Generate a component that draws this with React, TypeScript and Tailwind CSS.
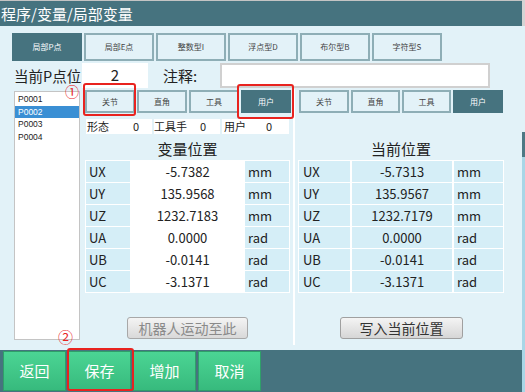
import React from "react";

const TYPE_TABS = ["局部P点", "局部E点", "整数型I", "浮点型D", "布尔型B", "字符型S"];
const SUB_TABS = ["关节", "直角", "工具", "用户"];
const POINTS = ["P0001", "P0002", "P0003", "P0004"];

const VAR_ROWS = [
  { k: "UX", v: "-5.7382", u: "mm" },
  { k: "UY", v: "135.9568", u: "mm" },
  { k: "UZ", v: "1232.7183", u: "mm" },
  { k: "UA", v: "0.0000", u: "rad" },
  { k: "UB", v: "-0.0141", u: "rad" },
  { k: "UC", v: "-3.1371", u: "rad" },
];

const CUR_ROWS = [
  { k: "UX", v: "-5.7313", u: "mm" },
  { k: "UY", v: "135.9567", u: "mm" },
  { k: "UZ", v: "1232.7179", u: "mm" },
  { k: "UA", v: "0.0000", u: "rad" },
  { k: "UB", v: "-0.0141", u: "rad" },
  { k: "UC", v: "-3.1371", u: "rad" },
];

function SubTabs({ widths }: { widths: string[] }) {
  return (
    <div className="ml-[1px] mt-[1px] flex gap-[2px] h-[23px]">
      {SUB_TABS.map((t, i) => (
        <div
          key={t}
          className={
            (i === 3
              ? "bg-[#46737f] text-white border-[#46737f] "
              : "bg-[#e3f2f8] text-[#444] border-[#8eaeb6] ") +
            widths[i] +
            " border-2 flex items-center justify-center text-[8px]"
          }
        >
          {t}
        </div>
      ))}
    </div>
  );
}

export default function App() {
  return (
    <div className="w-[525px] h-[392px] flex overflow-hidden font-['Noto_Sans_CJK_SC',sans-serif] text-[#222]">
      <div className="w-[522px] flex flex-col">
        <div className="h-px bg-[#c4c4c4]" />
        {/* Title */}
        <div className="h-[25px] bg-[#46737f] text-white text-[15px] leading-[25px] pl-[1px]">
          程序/变量/局部变量
        </div>

        {/* Body */}
        <div className="flex-1 bg-[#e2f2f8] relative">
          <div className="mt-[7px] ml-[12px] flex gap-[2px] h-[28px]">
            {TYPE_TABS.map((t, i) => (
              <div
                key={t}
                className={
                  (i === 0
                    ? "bg-[#46737f] text-white border-[#46737f] "
                    : "bg-[#e3f2f8] text-[#444] border-[#8eaeb6] ") +
                  "w-[70px] border-2 flex items-center justify-center text-[8px]"
                }
              >
                {t}
              </div>
            ))}
          </div>

          <div className="mt-[2px] h-[25px] flex items-center">
            <div className="ml-[14px] w-[68px] text-[14.5px] leading-[14px] whitespace-nowrap">当前P点位</div>
            <div className="w-[66px] h-[25px] bg-white flex items-center justify-center text-[15px]">2</div>
            <div className="ml-[15px] w-[57px] text-[15px] leading-none whitespace-nowrap">注释:</div>
            <div className="w-[270px] h-[25px] bg-white border-2 border-[#d0d0d0]" />
          </div>

          <div className="mt-[1px] flex">
            {/* point list */}
            <div className="ml-[14px] mt-[2px] w-[66px] h-[249px] bg-white border border-[#c4c4c4] pt-[1px] text-[8.5px] font-['Liberation_Sans',sans-serif]">
              {POINTS.map((p, i) => (
                <div
                  key={p}
                  className={
                    (i === 1 ? "bg-[#3a8fd4] text-white " : "") +
                    "h-[12.5px] leading-[12.5px] pl-[3px]"
                  }
                >
                  {p}
                </div>
              ))}
            </div>

            {/* variable panel */}
            <div className="ml-[4px] w-[207px] flex flex-col">
              <SubTabs widths={["w-[50px]", "w-[50px]", "w-[50px]", "w-[50px]"]} />
              <div className="mt-[6px] ml-[2px] flex gap-[2px] h-[15px] text-[11px] leading-[15px]">
                <div className="w-[66px] bg-white flex">
                  <span className="w-[47px] pl-[1px]">形态</span>
                  <span>0</span>
                </div>
                <div className="w-[66px] bg-white flex">
                  <span className="w-[46px]">工具手</span>
                  <span>0</span>
                </div>
                <div className="w-[67px] bg-white flex">
                  <span className="w-[44px] pl-[2px]">用户</span>
                  <span>0</span>
                </div>
              </div>
              <div className="h-[26px] pt-[4px] flex items-center justify-center text-[15px]">变量位置</div>
              <div className="ml-[1px] w-[205px] bg-white p-[1px] flex flex-col gap-[1px] text-[13px]">
                {VAR_ROWS.map((r) => (
                  <div key={r.k} className="grid grid-cols-[44px_111px_44px] gap-[2px] h-[21px] leading-[21px]">
                    <div className="bg-[#d5eef7] pl-[3px]">{r.k}</div>
                    <div className="bg-white text-center">{r.v}</div>
                    <div className="bg-[#d5eef7] pl-[3px]">{r.u}</div>
                  </div>
                ))}
              </div>
              <div className="mt-[24px] mx-auto w-[121px] h-[22px] rounded-[3px] border border-[#a8a8a8] bg-gradient-to-b from-[#f4f4f4] to-[#d9d9d9] flex items-center justify-center text-[14px] text-[#8a8a8a]">
                机器人运动至此
              </div>
            </div>

            {/* separator */}
            <div className="ml-[2px] w-[2px] h-[256px] bg-white" />

            {/* current position panel */}
            <div className="ml-[3px] w-[207px] flex flex-col">
              <SubTabs widths={["w-[50px]", "w-[49px]", "w-[49px]", "w-[50px]"]} />
              <div className="mt-[6px] h-[15px]" />
              <div className="w-[206px] h-[26px] pt-[4px] flex items-center justify-center text-[15px]">当前位置</div>
              <div className="w-[206px] bg-white p-[1px] flex flex-col gap-[1px] text-[13px]">
                {CUR_ROWS.map((r) => (
                  <div key={r.k} className="grid grid-cols-[51px_100px_49px] gap-[2px] h-[21px] leading-[21px]">
                    <div className="bg-[#d5eef7] pl-[4px]">{r.k}</div>
                    <div className="bg-[#d5eef7] text-center">{r.v}</div>
                    <div className="bg-[#d5eef7] pl-[3px]">{r.u}</div>
                  </div>
                ))}
              </div>
              <div className="mt-[24px] ml-[42px] w-[123px] h-[22px] rounded-[3px] border border-[#a0a0a0] bg-gradient-to-b from-[#f4f4f4] to-[#d6d6d6] flex items-center justify-center text-[14px] text-[#333]">
                写入当前位置
              </div>
            </div>
          </div>

          {/* annotations */}
          <div className="absolute left-[83px] top-[57px] w-[53px] h-[33px] border-2 border-[#e8231f] rounded-[3px]" />
          <div className="absolute left-[237px] top-[58px] w-[57px] h-[35px] border-2 border-[#e8231f] rounded-[3px]" />
          <div className="absolute left-[65px] top-[58px] text-[14px] leading-[14px] text-[#e8231f]">①</div>
          <div className="absolute left-[58px] top-[303px] text-[15px] leading-[15px] text-[#e8231f]">②</div>
        </div>

        {/* Bottom bar */}
        <div className="h-[42px] bg-[#46737f] flex items-center gap-[2px] pl-[3px] relative">
          {["返回", "保存", "增加", "取消"].map((b) => (
            <div
              key={b}
              className="w-[63px] h-[40px] border border-[#2f9f69] bg-gradient-to-b from-[#4bd594] to-[#37ba7d] flex items-center justify-center text-[15px] text-white"
            >
              {b}
            </div>
          ))}
          <div className="absolute left-[67px] top-[-2px] w-[67px] h-[43px] border-2 border-[#e8231f] rounded-[3px]" />
        </div>
      </div>

      {/* right edge strip */}
      <div className="w-[3px] flex flex-col">
        <div className="h-[26px] bg-[#d4d4d4]" />
        <div className="h-[106px] bg-[#e2f2f8]" />
        <div className="h-[25px] bg-[#4d7884]" />
        <div className="flex-1 bg-[#a8d6e6]" />
      </div>
    </div>
  );
}
